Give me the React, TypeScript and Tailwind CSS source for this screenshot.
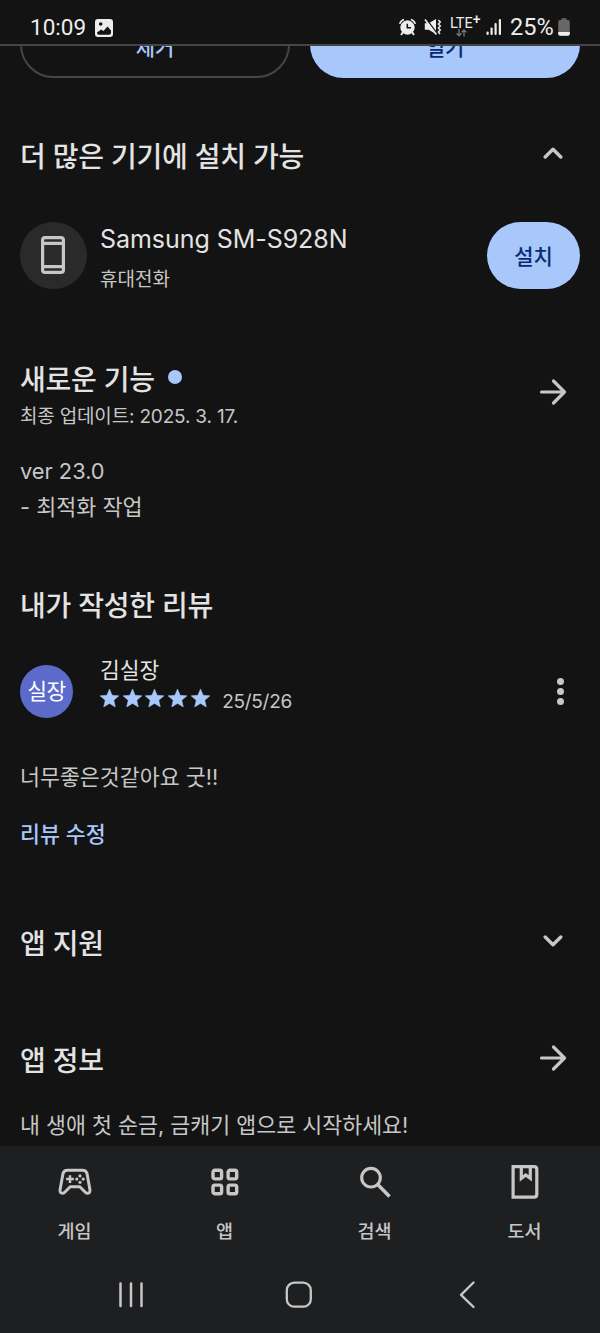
import React from 'react'

const HEADING = 'pt-[3px] text-[28px] leading-[40px] tracking-[-0.25px] font-medium text-[#e3e3e3] whitespace-nowrap'
const ICON_SLOT = 'flex w-[54px] shrink-0 items-center justify-center text-[#c7c7c7]'

function ArrowIcon() {
  return (
    <svg width="28" height="28" viewBox="0 0 28 28" fill="none" stroke="currentColor" strokeWidth="3.2" strokeLinecap="round" strokeLinejoin="round">
      <path d="M2.5 14H25M14.5 3L25.5 14L14.5 25" />
    </svg>
  )
}

function ChevronIcon({ up = false }: { up?: boolean }) {
  return (
    <svg width="20" height="12" viewBox="0 0 20 12" fill="none" stroke="currentColor" strokeWidth="3.4" strokeLinecap="round" strokeLinejoin="round">
      <path d={up ? 'M2.2 10L10 2.2L17.8 10' : 'M2.2 2L10 9.8L17.8 2'} />
    </svg>
  )
}

function StarIcon() {
  return (
    <svg width="19" height="18" viewBox="2 2 20 19" fill="currentColor" stroke="currentColor" strokeWidth="0.5">
      <path d="M12 17.27L18.18 21l-1.64-7.03L22 9.24l-7.19-.61L12 2 9.19 8.63 2 9.24l5.46 4.73L5.82 21z" />
    </svg>
  )
}

function StatusBar() {
  return (
    <header className="relative z-10 flex h-[46px] shrink-0 items-start border-b-2 border-[#454545] bg-[#131313] text-[#ededed]">
      <span className="ml-[30px] mt-[14px] w-[56px] whitespace-nowrap font-['Roboto',sans-serif] text-[22.5px] leading-[27px]">10:09</span>
      <svg className="ml-[9px] mt-[19px]" width="18" height="18" viewBox="0 0 18 18">
        <rect width="18" height="18" rx="3" fill="currentColor" />
        <circle cx="5.7" cy="5" r="1.8" fill="#131313" />
        <path d="M2 13.5L6.2 10.4L8.5 12L12.5 7.6L16 11.5V13.8Q16 15.8 14 15.8H4Q2 15.8 2 13.5Z" fill="#131313" />
      </svg>
      <div className="ml-auto mr-[30px] flex">
        <svg className="mt-[18px]" width="17" height="18" viewBox="0 0 17 18" fill="none" stroke="currentColor">
          <circle cx="8.5" cy="9.5" r="6.7" fill="currentColor" />
          <path d="M1 5.2Q2 2.8 4.3 1.7M16 5.2Q15 2.8 12.7 1.7" strokeWidth="1.7" strokeLinecap="round" />
          <path d="M4 14L2.5 16.3M13 14L14.5 16.3" strokeWidth="2" strokeLinecap="round" />
          <path d="M8.3 5.8V9.8H12" stroke="#131313" strokeWidth="1.5" />
        </svg>
        <svg className="ml-[8px] mt-[18px]" width="18" height="18" viewBox="0 0 18 18" fill="none" stroke="currentColor">
          <path d="M0.8 5.2H4.6L12 1V16L4.6 11.8H0.8Z" fill="currentColor" stroke="none" />
          <path d="M2.2 1L13 15.5" stroke="#131313" strokeWidth="1.6" />
          <path d="M1 1.4L12.3 16.4" strokeWidth="1.7" />
          <path d="M14.4 2L16.3 4L14.4 6L16.3 8L14.4 10L16.3 12L14.4 14L16 16" strokeWidth="1.5" />
        </svg>
        <div className="ml-[8px] mt-[17px] flex h-[21px] w-[31px] flex-col">
          <span className="flex whitespace-nowrap font-['Roboto',sans-serif] text-[14.5px] leading-[13px]">
            LTE
            <span className="-mt-[4px] text-[14px] font-medium leading-[13px]">+</span>
          </span>
          <svg className="-mt-px ml-[6px] shrink-0" width="11" height="8" viewBox="0 0 11 8" fill="none" stroke="#777777" strokeWidth="1.3">
            <path d="M3 0V6.5M0.6 4.2L3 6.8L5.4 4.2M8 7.5V1M5.6 3.4L8 1L10.4 3.4" />
          </svg>
        </div>
        <svg className="ml-[5px] mt-[18px]" width="16" height="18" viewBox="0 0 16 18" fill="currentColor">
          <rect x="0.5" y="13.5" width="2.2" height="3.5" rx="1" />
          <rect x="4.5" y="9.5" width="2.2" height="7.5" rx="1" />
          <rect x="8.5" y="5" width="2.2" height="12" rx="1" />
          <rect x="12.8" y="1" width="2.2" height="16" rx="1" />
        </svg>
        <span className="ml-[8px] mt-[14px] w-[45px] whitespace-nowrap font-['Roboto',sans-serif] text-[23.5px] leading-[27px]">25%</span>
        <svg className="ml-[3px] mt-[18px]" width="12" height="18" viewBox="0 0 12 18">
          <path d="M3.5 0.3H8.5V2H10Q11.8 2 11.8 4V15.8Q11.8 17.8 9.8 17.8H2.2Q0.2 17.8 0.2 15.8V4Q0.2 2 2 2H3.5Z" fill="#666666" />
          <path d="M0.2 14H11.8V15.8Q11.8 17.8 9.8 17.8H2.2Q0.2 17.8 0.2 15.8Z" fill="currentColor" />
        </svg>
      </div>
    </header>
  )
}

function DeviceSection() {
  return (
    <section className="mt-[56px]">
      <div className="flex h-10 justify-between">
        <h2 className={HEADING}>더 많은 기기에 설치 가능</h2>
        <button className={`${ICON_SLOT} h-[38px]`}>
          <ChevronIcon up />
        </button>
      </div>
      <div className="mt-[47.5px] flex h-[67px] items-center">
        <div className="flex size-[67px] items-center justify-center rounded-full bg-[#2a2a2a] pr-px text-[#c7c7c7]">
          <svg width="24" height="38" viewBox="0 0 24 38" fill="none" stroke="currentColor" strokeWidth="3.2">
            <rect x="1.6" y="1.6" width="20.8" height="34.8" rx="2.5" />
            <path d="M2 7.3H22M2 30.7H22" />
          </svg>
        </div>
        <div className="ml-[13px] mt-[3px] flex flex-col">
          <span className="whitespace-nowrap text-[25px] leading-[36px] tracking-[-0.05px] text-[#e3e3e3]">Samsung SM-S928N</span>
          <span className="mt-[10px] text-[19px] leading-[26px] text-[#c7c7c7]">휴대전화</span>
        </div>
        <button className="ml-auto h-[67px] w-[93px] rounded-full bg-[#a8c7fa] pt-[4px] text-[21px] font-medium text-[#062e6f]">설치</button>
      </div>
    </section>
  )
}

function WhatsNewSection() {
  return (
    <section className="mt-[69.5px]">
      <div className="flex h-[68px] justify-between">
        <div>
          <div className="flex h-10 items-center">
            <h2 className={HEADING}>새로운 기능</h2>
            <span className="-mt-[2px] ml-[13px] size-[14px] rounded-full bg-[#a8c7fa]" />
          </div>
          <p className="mt-[5px] whitespace-nowrap text-[19px] leading-[28px] tracking-[-0.18px] text-[#c7c7c7]">최종 업데이트: 2025. 3. 17.</p>
        </div>
        <button className={ICON_SLOT}>
          <ArrowIcon />
        </button>
      </div>
      <p className="mt-[27px] text-[21.8px] leading-[36px] text-[#c7c7c7]">
        ver 23.0
        <br />- 최적화 작업
      </p>
    </section>
  )
}

function ReviewSection() {
  return (
    <section className="mt-[58px]">
      <h2 className={`${HEADING} h-10`}>내가 작성한 리뷰</h2>
      <div className="mt-[29px] flex h-[68px]">
        <div className="mr-px mt-[13px] flex size-[53px] items-center justify-center rounded-full bg-[#5c6bc9] text-[21.5px] tracking-[-0.5px] text-white">실장</div>
        <div className="ml-[26px]">
          <p className="mt-[3px] text-[21.5px] leading-[30px] text-[#e3e3e3]">김실장</p>
          <div className="flex h-[22px] items-start">
            <div className="mt-[4px] flex gap-[3.7px] text-[#a8c7fa]">
              {[1, 2, 3, 4, 5].map((n) => (
                <StarIcon key={n} />
              ))}
            </div>
            <span className="ml-[12.5px] mt-[4px] text-[19px] leading-[26px] tracking-[-0.3px] text-[#c7c7c7]">25/5/26</span>
          </div>
        </div>
        <button className="ml-auto mr-[16px] mt-[26px] flex flex-col items-center gap-[2.6px]">
          <span className="size-[7.4px] rounded-full bg-[#c7c7c7]" />
          <span className="size-[7.4px] rounded-full bg-[#c7c7c7]" />
          <span className="size-[7.4px] rounded-full bg-[#c7c7c7]" />
        </button>
      </div>
      <p className="mt-[42px] text-[21.7px] leading-[30px] text-[#c7c7c7]">너무좋은것같아요 굿!!</p>
      <button className="mt-[27px] block text-[21.7px] font-medium leading-[30px] text-[#a8c7fa]">리뷰 수정</button>
    </section>
  )
}

const tabs = [
  {
    label: '게임',
    icon: (
      <svg width="34" height="34" viewBox="0 0 34 34" fill="none" stroke="currentColor" strokeWidth="3" strokeLinejoin="round">
        <path d="M9.5 5.2H24.5Q28 5.2 29 8.5L31.9 24.5Q32.4 28.3 29.7 28.3Q28.4 28.3 27.3 27.2L21.8 21.8H12.2L6.7 27.2Q5.6 28.3 4.3 28.3Q1.6 28.3 2.1 24.5L5 8.5Q6 5.2 9.5 5.2Z" />
        <path d="M12 10.2V18M8.1 14.1H15.9" strokeWidth="2.5" strokeLinejoin="miter" />
        <g fill="currentColor" stroke="none">
          <circle cx="22" cy="10.9" r="1.6" />
          <circle cx="22" cy="17.3" r="1.6" />
          <circle cx="18.8" cy="14.1" r="1.6" />
          <circle cx="25.2" cy="14.1" r="1.6" />
        </g>
      </svg>
    ),
  },
  {
    label: '앱',
    icon: (
      <svg width="34" height="34" viewBox="0 0 34 34" fill="none" stroke="currentColor" strokeWidth="3.4">
        <rect x="5" y="5.3" width="8.6" height="8.6" rx="1.8" />
        <rect x="20.1" y="5.3" width="8.6" height="8.6" rx="1.8" />
        <rect x="5" y="20.1" width="8.6" height="8.6" rx="1.8" />
        <rect x="20.1" y="20.1" width="8.6" height="8.6" rx="1.8" />
      </svg>
    ),
  },
  {
    label: '검색',
    icon: (
      <svg width="34" height="34" viewBox="0 0 34 34" fill="none" stroke="currentColor" strokeWidth="3.1">
        <circle cx="13" cy="12.7" r="9.3" />
        <path d="M19.5 19.2L31.5 31.4" strokeWidth="3.5" />
      </svg>
    ),
  },
  {
    label: '도서',
    icon: (
      <svg width="34" height="34" viewBox="0 0 34 34" fill="none" stroke="currentColor" strokeWidth="3.2">
        <path d="M5.1 1.7H26Q28.8 1.7 28.8 4.5V29.2Q28.8 32.2 26 32.2H5.1Z" />
        <path d="M13.3 2V13.4L17.7 10L22.3 13.4V2" />
      </svg>
    ),
  },
]

function BottomNav() {
  return (
    <footer className="relative z-10 h-[187px] shrink-0 bg-[#1e1f20] text-[#c7c7c7]">
      <nav className="grid h-[111px] grid-cols-4">
        {tabs.map((tab) => (
          <button key={tab.label} className="flex flex-col items-center pt-[19px]">
            {tab.icon}
            <span className="mt-[19px] pr-px text-[18.5px] font-medium leading-[26px]">{tab.label}</span>
          </button>
        ))}
      </nav>
      <div className="grid h-[76px] grid-cols-3 justify-items-center pl-[46px] pr-[48px] pt-[23px]">
        <svg width="28" height="30" viewBox="0 0 28 30" stroke="currentColor" strokeWidth="2.5" strokeLinecap="round">
          <path d="M4.5 3.5V26M15 3.5V26M25.5 3.5V26" />
        </svg>
        <svg width="30" height="30" viewBox="0 0 30 30" fill="none" stroke="currentColor" strokeWidth="2.3">
          <rect x="2.8" y="2.7" width="24" height="24" rx="7.5" />
        </svg>
        <svg width="28" height="30" viewBox="0 0 28 30" fill="none" stroke="currentColor" strokeWidth="2.4" strokeLinecap="round" strokeLinejoin="round">
          <path d="M19.5 2.5L7 14.8L19.5 27" />
        </svg>
      </div>
    </footer>
  )
}

export default function App() {
  return (
    <div className="flex h-[1333px] w-[600px] flex-col overflow-hidden bg-[#131313] font-['Inter','Noto_Sans_CJK_KR',sans-serif]">
      <StatusBar />
      <main className="-mt-[35px] flex-1 overflow-hidden px-5">
        <div className="grid h-[67px] grid-cols-2 gap-5 text-[21px] font-medium">
          <button className="rounded-full border-2 border-[#444746] pt-[6px] text-[#a8c7fa]">제거</button>
          <button className="rounded-full bg-[#a8c7fa] pt-[6px] text-[#062e6f]">열기</button>
        </div>
        <DeviceSection />
        <WhatsNewSection />
        <ReviewSection />
        <section className="mt-[72px] flex h-10 justify-between">
          <h2 className={HEADING}>앱 지원</h2>
          <button className={ICON_SLOT}>
            <ChevronIcon />
          </button>
        </section>
        <section className="mt-[77px]">
          <div className="flex h-10 justify-between">
            <h2 className={HEADING}>앱 정보</h2>
            <button className={ICON_SLOT}>
              <ArrowIcon />
            </button>
          </div>
          <p className="mt-[32px] whitespace-nowrap text-[21.7px] leading-[30px] text-[#c7c7c7]">내 생애 첫 순금, 금캐기 앱으로 시작하세요!</p>
        </section>
      </main>
      <BottomNav />
    </div>
  )
}
